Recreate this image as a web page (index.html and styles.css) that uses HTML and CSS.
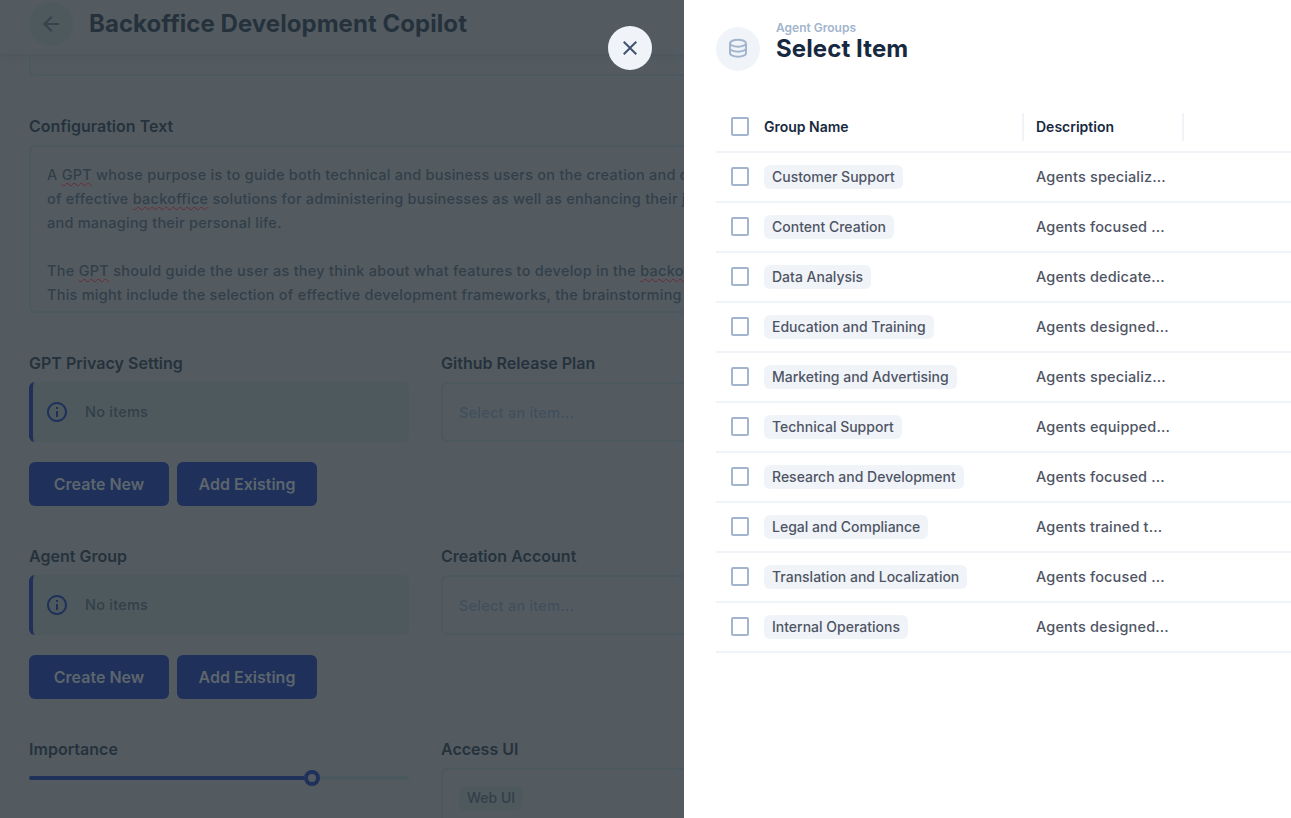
FILE: index.html
```html
<!DOCTYPE html>
<html lang="en">
<head>
<meta charset="utf-8">
<title>Backoffice Development Copilot</title>
<link rel="stylesheet" href="styles.css">
</head>
<body>
<div class="app">
  <main class="page">
    <header class="page-header">
      <span class="back"><svg width="24" height="24" viewBox="0 0 24 24"><path d="M20 11H7.83l5.59-5.59L12 4l-8 8 8 8 1.41-1.41L7.83 13H20z"/></svg></span>
      <h1 class="page-title">Backoffice Development Copilot</h1>
    </header>
    <div class="form">
      <div class="input input-cut"></div>
      <section class="field">
        <h2 class="label">Configuration Text</h2>
        <div class="input textarea"><p>A <u>GPT</u> whose purpose is to guide both technical and business users on the creation and d</p><p>of effective <u>backoffice</u> solutions for administering businesses as well as enhancing their j</p><p>and managing their personal life.</p><br><p class="loose">The <u>GPT</u> should guide the user as they think about what features to develop in the <u>backof</u></p><p>This might include the selection of effective development frameworks, the brainstorming</p></div>
      </section>
      <div class="grid">
        <section class="field">
          <h2 class="label">GPT Privacy Setting</h2>
          <div class="notice"><svg width="24" height="24" viewBox="0 0 24 24"><path d="M11 7h2v2h-2zm0 4h2v6h-2zm1-9C6.48 2 2 6.48 2 12s4.48 10 10 10 10-4.48 10-10S17.52 2 12 2zm0 18c-4.41 0-8-3.59-8-8s3.59-8 8-8 8 3.590 8 8-3.590 8-8 8z"/></svg><span>No items</span></div>
          <div class="actions"><button class="button">Create New</button><button class="button">Add Existing</button></div>
        </section>
        <section class="field">
          <h2 class="label">Github Release Plan</h2>
          <div class="input select">Select an item...</div>
        </section>
        <section class="field">
          <h2 class="label">Agent Group</h2>
          <div class="notice"><svg width="24" height="24" viewBox="0 0 24 24"><path d="M11 7h2v2h-2zm0 4h2v6h-2zm1-9C6.48 2 2 6.48 2 12s4.48 10 10 10 10-4.48 10-10S17.52 2 12 2zm0 18c-4.41 0-8-3.590-8-8s3.590-8 8-8 8 3.590 8 8-3.590 8-8 8z"/></svg><span>No items</span></div>
          <div class="actions"><button class="button">Create New</button><button class="button">Add Existing</button></div>
        </section>
        <section class="field">
          <h2 class="label">Creation Account</h2>
          <div class="input select">Select an item...</div>
        </section>
        <section class="field">
          <h2 class="label">Importance</h2>
          <div class="slider"><span class="slider-fill"></span><span class="slider-thumb"></span><span class="slider-rest"></span></div>
        </section>
        <section class="field">
          <h2 class="label">Access UI</h2>
          <div class="input select tags"><span class="chip">Web UI</span></div>
        </section>
      </div>
    </div>
    <button class="close" aria-label="Close"><svg width="24" height="24" viewBox="0 0 24 24"><path d="M19 6.410 17.590 5 12 10.590 6.410 5 5 6.410 10.590 12 5 17.590 6.410 19 12 13.410 17.590 19 19 17.590 13.410 12z"/></svg></button>
  </main>
  <aside class="drawer">
    <header class="drawer-header">
      <span class="drawer-icon"><svg class="outline" width="24" height="24" viewBox="0 0 24 24"><ellipse cx="12" cy="6.200" rx="8" ry="3.500"/><path d="M4 6.200v10c0 1.930 3.580 3.500 8 3.500s8-1.570 8-3.500v-10M4 11.200c0 1.930 3.580 3.500 8 3.500s8-1.570 8-3.500"/></svg></span>
      <div class="drawer-heading"><span class="crumb">Agent Groups</span><h2 class="drawer-title">Select Item</h2></div>
    </header>
    <div class="table">
      <div class="row head"><i class="check"></i><span class="cell name">Group Name</span><span class="cell desc">Description</span></div>
      <div class="row"><i class="check"></i><span class="cell name"><b class="tag">Customer Support</b></span><span class="cell desc">Agents specializ...</span></div>
      <div class="row"><i class="check"></i><span class="cell name"><b class="tag">Content Creation</b></span><span class="cell desc">Agents focused ...</span></div>
      <div class="row"><i class="check"></i><span class="cell name"><b class="tag">Data Analysis</b></span><span class="cell desc">Agents dedicate...</span></div>
      <div class="row"><i class="check"></i><span class="cell name"><b class="tag">Education and Training</b></span><span class="cell desc">Agents designed...</span></div>
      <div class="row"><i class="check"></i><span class="cell name"><b class="tag">Marketing and Advertising</b></span><span class="cell desc">Agents specializ...</span></div>
      <div class="row"><i class="check"></i><span class="cell name"><b class="tag">Technical Support</b></span><span class="cell desc">Agents equipped...</span></div>
      <div class="row"><i class="check"></i><span class="cell name"><b class="tag">Research and Development</b></span><span class="cell desc">Agents focused ...</span></div>
      <div class="row"><i class="check"></i><span class="cell name"><b class="tag">Legal and Compliance</b></span><span class="cell desc">Agents trained t...</span></div>
      <div class="row"><i class="check"></i><span class="cell name"><b class="tag">Translation and Localization</b></span><span class="cell desc">Agents focused ...</span></div>
      <div class="row"><i class="check"></i><span class="cell name"><b class="tag">Internal Operations</b></span><span class="cell desc">Agents designed...</span></div>
    </div>
  </aside>
</div>
</body>
</html>
```

FILE: styles.css
```css
* { box-sizing: border-box; }
body { margin: 0; font: 500 14.5px/24px Inter, "Liberation Sans", sans-serif; letter-spacing: 0.24px; }
h1, h2, p { margin: 0; }
button { border: 0; padding: 0; font: inherit; letter-spacing: 0; }
svg { display: block; fill: currentColor; flex: none; }
.outline { fill: none; stroke: currentColor; stroke-width: 2; }

.app { display: flex; width: 100vw; height: 818px; overflow: hidden; }

/* Dimmed page behind the drawer */
.page { position: relative; flex: none; width: 684px; height: 818px; overflow: hidden; background: #535b61; color: #323f49; }
.page-header { display: flex; align-items: center; gap: 16px; height: 54px; padding: 0 0 6px 29px; box-shadow: 0 1px 5px 1px #4d565c; }
.back { display: grid; place-items: center; width: 44px; height: 44px; border-radius: 50%; background: #4e595e; color: #35424c; }
.page-title { font-size: 24px; line-height: 32px; font-weight: 700; letter-spacing: 0.05px; color: #25323c; white-space: nowrap; }
.form { width: 821px; padding-left: 29px; }
.input { border: 2px solid #4b585e; border-radius: 6px; }
.input-cut { height: 22px; margin-bottom: 38px; border-top: 0; border-radius: 0 0 6px 6px; }
.label { margin-bottom: 7px; font-size: 16px; line-height: 24px; font-weight: 600; letter-spacing: 0.02px; color: #25323c; }
.textarea { height: 168px; padding: 16px 16px 0; overflow: hidden; white-space: nowrap; }
.textarea u { text-decoration: underline wavy #6a2a32 1px; text-underline-offset: 2px; text-decoration-skip-ink: none; }
.loose { letter-spacing: 0.27px; }
.grid { display: grid; grid-template-columns: 380px 380px; gap: 38px 32px; margin-top: 38px; }
.notice { display: flex; align-items: center; gap: 16px; height: 60px; padding-left: 12px; border-left: 4px solid #1f305b; border-radius: 6px; background: #4e595e; }
.notice svg { color: #1f305b; }
.actions { display: flex; gap: 8px; margin-top: 20px; }
.button { width: 140px; height: 44px; border-radius: 6px; background: #1f305b; color: #5c666c; font-size: 16px; font-weight: 600; }
.select { display: flex; align-items: center; height: 60px; padding: 2px 0 0 16px; color: #414f5c; }
.tags { padding-top: 0; }
.chip { padding: 0 8px; border-radius: 6px; background: #4e595e; color: #323f49; font-size: 14px; letter-spacing: 0; }
.slider { display: flex; align-items: center; height: 20px; }
.slider-fill { width: 275px; height: 4px; border-radius: 2px 0 0 2px; background: #1f305b; }
.slider-thumb { width: 16px; height: 16px; border: 4px solid #1f305b; border-radius: 50%; }
.slider-rest { flex: 1; height: 4px; border-radius: 0 2px 2px 0; background: #4b585e; }
.close { position: absolute; top: 26px; right: 32px; display: grid; place-items: center; width: 44px; height: 44px; padding-bottom: 1px; border-radius: 50%; background: #f0f4f9; color: #42526e; }

/* Item picker */
.drawer { flex: 1; min-width: 0; padding-left: 32px; overflow: hidden; background: #fff; color: #4f5464; }
.drawer-header { display: flex; gap: 16px; height: 103px; padding-top: 20px; }
.drawer-icon { display: grid; place-items: center; width: 44px; height: 44px; margin-top: 7px; border-radius: 50%; background: #f0f4f9; color: #a2b5cd; }
.drawer-heading { display: flex; flex-direction: column; }
.crumb { font-size: 12px; line-height: 16px; font-weight: 600; letter-spacing: 0; color: #a2b5cd; }
.drawer-title { font-size: 24px; line-height: 26px; font-weight: 700; letter-spacing: 0.1px; color: #172940; }
.row { display: flex; align-items: center; height: 50px; padding-left: 15px; border-bottom: 2px solid #f0f4f9; }
.check { flex: none; width: 18px; height: 19px; margin: 0 15px 1px 0; border: 2px solid #a2b5cd; border-radius: 2px; }
.cell { display: flex; align-items: center; height: 28px; white-space: nowrap; }
.name { width: 260px; }
.desc { width: 160px; padding-left: 12px; letter-spacing: 0.15px; }
.head { font-size: 14px; font-weight: 600; color: #172940; }
.head .cell { border-right: 2px solid #f0f4f9; letter-spacing: 0; }
.tag { padding: 0 8px; border-radius: 6px; background: #f0f4f9; font-size: 14px; line-height: 24px; font-weight: 500; letter-spacing: 0; }
```
